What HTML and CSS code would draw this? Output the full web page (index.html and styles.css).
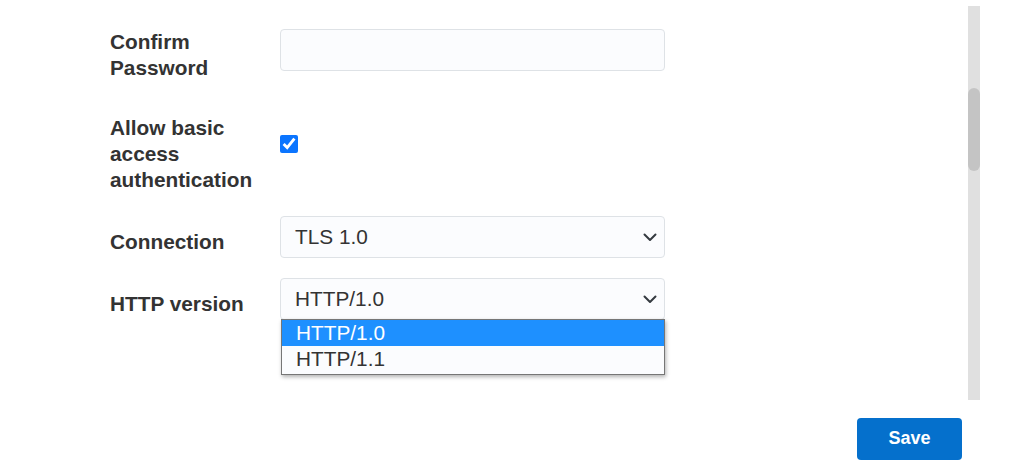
FILE: index.html
```html
<!DOCTYPE html>
<html lang="en">
<head>
<meta charset="utf-8">
<title>Settings</title>
<link rel="stylesheet" href="styles.css">
</head>
<body>
<div class="panel">
  <div class="content">
    <div class="row row-first">
      <label class="label">Confirm Password</label>
      <div class="control"><input class="text-input" type="password"></div>
    </div>
    <div class="row row-check">
      <label class="label">Allow basic access authentication</label>
      <div class="control control-check"><input class="check" type="checkbox" checked></div>
    </div>
    <div class="row row-conn">
      <label class="label">Connection</label>
      <div class="control">
        <div class="select">
          <span>TLS 1.0</span>
          <svg class="chevron" width="14" height="9" viewBox="0 0 14 9"><path d="M1.5 1.5 L7 7 L12.5 1.5" fill="none" stroke="#343a40" stroke-width="2" stroke-linecap="round" stroke-linejoin="round"/></svg>
        </div>
      </div>
    </div>
    <div class="row row-http">
      <label class="label">HTTP version</label>
      <div class="control control-open">
        <div class="select">
          <span>HTTP/1.0</span>
          <svg class="chevron" width="14" height="9" viewBox="0 0 14 9"><path d="M1.5 1.5 L7 7 L12.5 1.5" fill="none" stroke="#343a40" stroke-width="2" stroke-linecap="round" stroke-linejoin="round"/></svg>
        </div>
        <ul class="dropdown">
          <li class="option option-active">HTTP/1.0</li>
          <li class="option">HTTP/1.1</li>
        </ul>
      </div>
    </div>
  </div>
  <div class="scrollbar"><div class="thumb"></div></div>
</div>
<div class="footer">
  <button class="save" type="button">Save</button>
</div>
</body>
</html>
```

FILE: styles.css
```css
html, body {
  margin: 0;
  padding: 0;
  background: #ffffff;
}

body {
  font-family: "Liberation Sans", Arial, sans-serif;
  color: #333333;
  width: 1009px;
  height: 471px;
  overflow: hidden;
}

.panel {
  display: flex;
  height: 394px;
  margin-top: 6px;
}

.content {
  flex: 1;
  padding: 13px 0 0 110px;
  display: flex;
  flex-direction: column;
}

.row {
  display: flex;
  align-items: center;
  gap: 10px;
}

.row-check { margin-top: 24px; align-items: flex-start; }
.row-conn { margin-top: 23px; }
.row-http { margin-top: 20px; }

.label {
  width: 160px;
  padding-top: 10px;
  font-size: 20.8px;
  line-height: 26px;
  font-weight: bold;
  color: #333333;
}

.control {
  width: 385px;
  position: relative;
}

.control-check {
  padding-top: 30px;
}

.text-input {
  display: block;
  box-sizing: border-box;
  width: 385px;
  height: 42px;
  margin: 0;
  border: 1px solid #dee2e6;
  border-radius: 4px;
  background: #fbfcfe;
  outline: none;
}

.check {
  display: block;
  width: 18px;
  height: 18px;
  margin: 0;
  accent-color: #0b75ff;
}

.select {
  box-sizing: border-box;
  height: 42px;
  display: flex;
  align-items: center;
  justify-content: space-between;
  padding: 0 7px 0 14px;
  border: 1px solid #dee2e6;
  border-radius: 4px;
  background: #fbfcfe;
  font-size: 20.8px;
  color: #333333;
}

.chevron {
  display: block;
  margin-top: 1px;
}

.dropdown {
  position: absolute;
  top: 41px;
  left: 1px;
  width: 384px;
  box-sizing: border-box;
  margin: 0;
  padding: 0 0 2px;
  list-style: none;
  border: 1px solid #767676;
  background: #fbfcfe;
  box-shadow: 1px 2px 4px rgba(0, 0, 0, 0.3);
  z-index: 2;
}

.option {
  height: 26px;
  line-height: 26px;
  padding-left: 14px;
  font-size: 20.8px;
  color: #333333;
}

.option-active {
  background: #1e90ff;
  color: #ffffff;
}

.scrollbar {
  width: 12px;
  margin-right: 29px;
  background: #e0e0e0;
}

.thumb {
  margin-top: 82px;
  height: 83px;
  border-radius: 6px;
  background: #c4c4c4;
}

.footer {
  display: flex;
  justify-content: flex-end;
  padding-right: 47px;
  margin-top: 18px;
}

.save {
  width: 105px;
  height: 42px;
  padding: 0 0 2px;
  border: none;
  border-radius: 4px;
  background: #0570cc;
  color: #ffffff;
  font-family: "Liberation Sans", Arial, sans-serif;
  font-weight: bold;
  font-size: 18px;
  cursor: pointer;
}
```
